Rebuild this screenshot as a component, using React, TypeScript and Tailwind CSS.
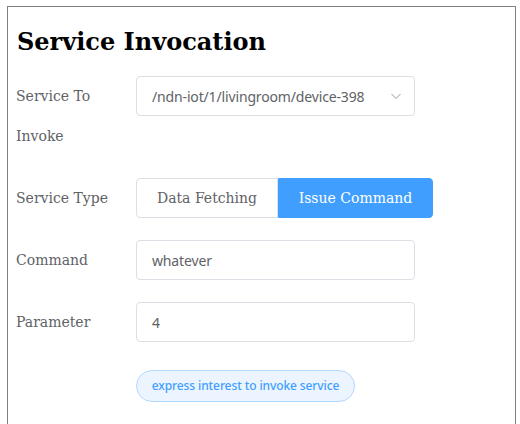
import React from "react";

const serif = { fontFamily: '"DejaVu Serif", serif' };
const sans = { fontFamily: '"Noto Sans", sans-serif', letterSpacing: "-0.15px" };

function Label({ children }: { children: React.ReactNode }) {
  return (
    <div className="w-[120px] shrink-0 text-[14px] leading-[40px] text-[#606266] pr-3" style={serif}>
      {children}
    </div>
  );
}

export default function App() {
  return (
    <div className="w-[520px] h-[424px] bg-white overflow-hidden">
      <div className="ml-[7px] mt-[6px] w-[509px] h-[430px] border border-[#808080] pl-[8px] pr-[9px]">
        <h1 className="text-[24px] font-bold text-black mt-[19px] mb-[18px] leading-[32px] ml-[1px]" style={serif}>
          Service Invocation
        </h1>
        <div className="flex mb-[22px]">
          <Label>
            Service To
            <br />
            Invoke
          </Label>
          <div className="w-[279px] h-[40px] border border-[#dcdfe6] rounded-[4px] flex items-center justify-between pl-[15px] pr-[10px]">
            <span className="text-[14px] text-[#606266]" style={sans}>
              /ndn-iot/1/livingroom/device-398
            </span>
            <svg width="14" height="14" viewBox="0 0 14 14" className="mr-[1px]">
              <path d="M2.5 5l4.5 4.5L11.5 5" fill="none" stroke="#c0c4cc" strokeWidth="1.2" />
            </svg>
          </div>
        </div>
        <div className="flex mb-[22px]">
          <Label>Service Type</Label>
          <div className="flex h-[40px]">
            <div className="w-[142px] h-[40px] border border-[#dcdfe6] rounded-l-[4px] flex items-center justify-center text-[14px] text-[#606266]" style={serif}>
              Data Fetching
            </div>
            <div className="w-[155px] h-[40px] bg-[#409eff] border border-[#409eff] rounded-r-[4px] flex items-center justify-center text-[14px] text-white" style={serif}>
              Issue Command
            </div>
          </div>
        </div>
        <div className="flex mb-[22px]">
          <Label>Command</Label>
          <div className="w-[279px] h-[40px] border border-[#dcdfe6] rounded-[4px] flex items-center pl-[15px] text-[14px] text-[#606266]" style={sans}>
            whatever
          </div>
        </div>
        <div className="flex mb-[22px]">
          <Label>Parameter</Label>
          <div className="w-[279px] h-[40px] border border-[#dcdfe6] rounded-[4px] flex items-center pl-[15px] text-[14px] text-[#606266]" style={sans}>
            4
          </div>
        </div>
        <div className="flex h-[40px] items-center">
          <div className="w-[120px] shrink-0" />
          <div className="h-[32px] w-[219px] mt-[4px] rounded-full bg-[#ecf5ff] border border-[#b3d8ff] text-[#409eff] text-[12px] font-medium flex items-center justify-center" style={{ fontFamily: '"Noto Sans", sans-serif', letterSpacing: "-0.1px" }}>
            express interest to invoke service
          </div>
        </div>
      </div>
    </div>
  );
}
